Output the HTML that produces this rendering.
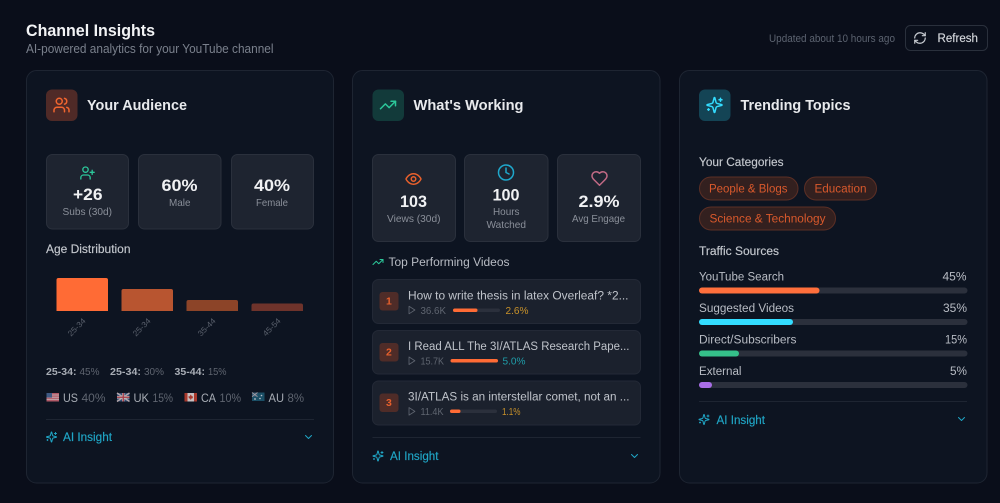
<!DOCTYPE html>
<html lang="en">
<head>
<meta charset="utf-8">
<title>Channel Insights</title>
<style>
html,body{margin:0;padding:0;background:#0a0e1a;width:1000px;height:503px;overflow:hidden}
svg{display:block;filter:blur(.3px)}
text{font-family:"Liberation Sans",sans-serif;white-space:pre}
.i{fill:none;stroke-linecap:round;stroke-linejoin:round;stroke-width:2}
.b{font-weight:700}
.card{fill:#0d1421;stroke:#1e2532}
.box{fill:#1e2430;stroke:#2a303c}
.row{fill:#1b212d;stroke:#232936}
.lab{fill:#8a8f99;font-size:10.5px}
.num{fill:#f0f1f3;font-size:16.5px;font-weight:700}
.h{fill:#e8eaed;font-size:14.5px;font-weight:700}
.sub{fill:#c4c8ce;font-size:11.5px;stroke:#c4c8ce;stroke-width:.15px}
.ai{fill:#20a6c6;font-size:11.5px;stroke:#20a6c6;stroke-width:.15px}
.tag{fill:#d9592c;font-size:11.5px}
.pill{fill:#33201f;stroke:#5c2f25}
.t{fill:#b8bcc4;font-size:11.500px}
.m{fill:#5f6570;font-size:10.5px}
.g{fill:#5f6570;font-size:11.5px}
.c{fill:#a8adb5;font-size:11.5px}
.lb{fill:#a8adb5;font-size:10.5px;font-weight:700}
.x{fill:#5a606c;font-size:8px}
.tr{fill:#2b303c}
.vt{fill:#bfc3ca;font-size:11.5px}
.n{fill:#e8602c;font-size:10.5px;font-weight:700}
</style>
</head>
<body>
<svg xmlns="http://www.w3.org/2000/svg" width="1000" height="503" viewBox="0 0 1000 503">
<defs>
<g id="users"><path d="M16 21v-2a4 4 0 0 0-4-4H6a4 4 0 0 0-4 4v2"/><circle cx="9" cy="7" r="4"/><path d="M22 21v-2a4 4 0 0 0-3-3.87"/><path d="M16 3.13a4 4 0 0 1 0 7.75"/></g>
<g id="uplus"><path d="M16 21v-2a4 4 0 0 0-4-4H6a4 4 0 0 0-4 4v2"/><circle cx="9" cy="7" r="4"/><path d="M19 8v6M22 11h-6"/></g>
<g id="trend"><path d="M22 7l-8.5 8.500-5-5L2 17"/><path d="M16 7h6v6"/></g>
<g id="spark"><path d="M9.937 15.500A2 2 0 0 0 8.500 14.063l-6.135-1.582a.5.5 0 0 1 0-.962L8.500 9.936A2 2 0 0 0 9.937 8.500l1.582-6.135a.5.5 0 0 1 .963 0L14.063 8.500A2 2 0 0 0 15.500 9.937l6.135 1.581a.5.5 0 0 1 0 .964L15.500 14.063a2 2 0 0 0-1.437 1.437l-1.582 6.135a.5.5 0 0 1-.963 0z"/><path d="M20 3v4M22 5h-4M4 17v2M5 18H3"/></g>
<g id="refresh"><path d="M3 12a9 9 0 0 1 9-9 9.750 9.750 0 0 1 6.740 2.740L21 8"/><path d="M21 3v5h-5"/><path d="M21 12a9 9 0 0 1-9 9 9.750 9.750 0 0 1-6.740-2.740L3 16"/><path d="M8 16H3v5"/></g>
<g id="eye"><path d="M2 12s3-7 10-7 10 7 10 7-3 7-10 7-10-7-10-7Z"/><circle cx="12" cy="12" r="3"/></g>
<g id="clock"><circle cx="12" cy="12" r="10"/><path d="M12 6v6l4 2"/></g>
<g id="heart"><path d="M19 14c1.490-1.460 3-3.210 3-5.500A5.500 5.500 0 0 0 16.500 3c-1.760 0-3 .5-4.500 2-1.500-1.500-2.740-2-4.500-2A5.500 5.500 0 0 0 2 8.500c0 2.300 1.500 4.050 3 5.500l7 7Z"/></g>
<g id="play"><path d="M6 3l14 9-14 9z"/></g>
<g id="chev"><path d="M6 9l6 6 6-6"/></g>
</defs>

<rect width="1000" height="503" fill="#0a0e1a"/>

<!-- Header -->
<text x="26" y="36" fill="#f2f3f5" font-size="16.5" class="b" textLength="129" lengthAdjust="spacingAndGlyphs">Channel Insights</text>
<text x="26" y="53" fill="#7a808c" font-size="12.5" textLength="247.500" lengthAdjust="spacingAndGlyphs">AI-powered analytics for your YouTube channel</text>
<text x="769" y="42" fill="#5c6370" font-size="11" textLength="126" lengthAdjust="spacingAndGlyphs">Updated about 10 hours ago</text>
<rect x="905.500" y="25.500" width="82" height="25" rx="5" fill="#0b101c" stroke="#2a303c"/>
<use href="#refresh" class="i" stroke="#c8ccd2" transform="translate(913,31) scale(.583)"/>
<text x="937.500" y="42" fill="#d5d8dd" font-size="11.5" stroke="#d5d8dd" stroke-width=".15" textLength="40.500" lengthAdjust="spacingAndGlyphs">Refresh</text>

<!-- Card 1 -->
<rect class="card" x="26.500" y="70.500" width="307" height="412.500" rx="10"/>
<rect x="46" y="89.500" width="31.500" height="31.500" rx="6" fill="#4f2a27"/>
<use href="#users" class="i" stroke="#f0652f" transform="translate(52.500,96) scale(.75)"/>
<text class="h" x="87" y="110" textLength="100" lengthAdjust="spacingAndGlyphs">Your Audience</text>

<rect class="box" x="46.500" y="154.500" width="82" height="74.500" rx="6"/>
<rect class="box" x="138.500" y="154.500" width="82.500" height="74.500" rx="6"/>
<rect class="box" x="231.500" y="154.500" width="82" height="74.500" rx="6"/>
<use href="#uplus" class="i" stroke="#2cc79a" transform="translate(79.500,165) scale(.667)"/>
<text class="num" x="73" y="200" textLength="29.500" lengthAdjust="spacingAndGlyphs">+26</text>
<text class="lab" x="62.500" y="215" textLength="49.500" lengthAdjust="spacingAndGlyphs">Subs (30d)</text>
<text class="num" x="161.500" y="191" textLength="36" lengthAdjust="spacingAndGlyphs">60%</text>
<text class="lab" x="169" y="206" textLength="21.500" lengthAdjust="spacingAndGlyphs">Male</text>
<text class="num" x="254" y="191" textLength="36" lengthAdjust="spacingAndGlyphs">40%</text>
<text class="lab" x="256" y="206" textLength="32" lengthAdjust="spacingAndGlyphs">Female</text>

<text class="sub" x="46" y="253" textLength="84.500" lengthAdjust="spacingAndGlyphs">Age Distribution</text>
<path d="M56.500 311v-31a2 2 0 0 1 2-2h47.500a2 2 0 0 1 2 2v31z" fill="#ff6b35"/>
<path d="M121.500 311v-20a2 2 0 0 1 2-2h47.500a2 2 0 0 1 2 2v20z" fill="#b85530"/>
<path d="M186.500 311v-9a2 2 0 0 1 2-2h47.500a2 2 0 0 1 2 2v9z" fill="#8c4428"/>
<path d="M251.500 311v-5.500a2 2 0 0 1 2-2h47.500a2 2 0 0 1 2 2v5.500z" fill="#6e332b"/>
<text class="x" transform="translate(71,336.700) rotate(-45)" textLength="21.500" lengthAdjust="spacingAndGlyphs">25-34</text>
<text class="x" transform="translate(136,336.700) rotate(-45)" textLength="21.500" lengthAdjust="spacingAndGlyphs">25-34</text>
<text class="x" transform="translate(201,336.700) rotate(-45)" textLength="21.500" lengthAdjust="spacingAndGlyphs">35-44</text>
<text class="x" transform="translate(266,336.700) rotate(-45)" textLength="21.500" lengthAdjust="spacingAndGlyphs">45-54</text>

<text class="lb" x="46" y="375" textLength="30.500" lengthAdjust="spacingAndGlyphs">25-34:</text>
<text class="m" x="79.500" y="375" textLength="20" lengthAdjust="spacingAndGlyphs">45%</text>
<text class="lb" x="110" y="375" textLength="31" lengthAdjust="spacingAndGlyphs">25-34:</text>
<text class="m" x="144" y="375" textLength="20" lengthAdjust="spacingAndGlyphs">30%</text>
<text class="lb" x="174.500" y="375" textLength="30.500" lengthAdjust="spacingAndGlyphs">35-44:</text>
<text class="m" x="208" y="375" textLength="18.500" lengthAdjust="spacingAndGlyphs">15%</text>

<!-- Flags -->
<g opacity=".82">
<g transform="translate(46.500,393)"><rect width="12.500" height="8.500" fill="#d66a78"/><path d="M0 2h12.500M0 4.200h12.500M0 6.400h12.500" stroke="#eac9cc" stroke-width="1"/><rect width="5.500" height="4.500" fill="#4a6a9a"/></g>
<g transform="translate(117,393)"><rect width="12.500" height="8.500" fill="#3c5a85"/><path d="M0 0l12.500 8.500M12.500 0L0 8.500" stroke="#d9c6c8" stroke-width="1.500"/><path d="M6.250 0v8.500M0 4.250h12.500" stroke="#e8e0e0" stroke-width="2.400"/><path d="M6.250 0v8.500M0 4.250h12.500" stroke="#c9434e" stroke-width="1.300"/></g>
<g transform="translate(184.500,393)"><rect width="12.500" height="8.500" fill="#f0e4e2"/><rect width="3" height="8.500" fill="#c9402f"/><rect x="9.500" width="3" height="8.500" fill="#c9402f"/><path d="M6.250 1.500l1.300 2 1-.3-.4 2-1.500.6v1h-.8v-1l-1.500-.6-.4-2 1 .3z" fill="#c9402f"/></g>
<g transform="translate(252,392.500)"><rect width="12.500" height="8.500" fill="#1f5c76"/><rect width="5.500" height="4.200" fill="#3a6a88"/><path d="M0 0l5.500 4.200M5.500 0L0 4.200" stroke="#c8b8bc" stroke-width=".8"/><circle cx="9.500" cy="3" r=".8" fill="#dfe8ee"/><circle cx="8" cy="6" r=".8" fill="#dfe8ee"/><circle cx="3" cy="6.500" r=".9" fill="#dfe8ee"/></g>
</g>
<text class="c" x="63" y="402" textLength="15" lengthAdjust="spacingAndGlyphs">US</text>
<text class="g" x="81.500" y="402" textLength="24" lengthAdjust="spacingAndGlyphs">40%</text>
<text class="c" x="133.500" y="402" textLength="15.500" lengthAdjust="spacingAndGlyphs">UK</text>
<text class="g" x="152.500" y="402" textLength="20.500" lengthAdjust="spacingAndGlyphs">15%</text>
<text class="c" x="201" y="402" textLength="15" lengthAdjust="spacingAndGlyphs">CA</text>
<text class="g" x="219.500" y="402" textLength="21.500" lengthAdjust="spacingAndGlyphs">10%</text>
<text class="c" x="268.500" y="402" textLength="15.500" lengthAdjust="spacingAndGlyphs">AU</text>
<text class="g" x="287.500" y="402" textLength="16.500" lengthAdjust="spacingAndGlyphs">8%</text>

<path d="M46 419.500h268" stroke="#1e2532"/>
<use href="#spark" class="i" stroke="#20a6c6" transform="translate(45.500,431) scale(.5)"/>
<text class="ai" x="63" y="441" textLength="49" lengthAdjust="spacingAndGlyphs">AI Insight</text>
<use href="#chev" class="i" stroke="#20a6c6" transform="translate(302.500,431) scale(.5)"/>

<!-- Card 2 -->
<rect class="card" x="352.500" y="70.500" width="307.500" height="412.500" rx="10"/>
<rect x="372.500" y="89.500" width="31.500" height="31.500" rx="6" fill="#123a3a"/>
<use href="#trend" class="i" stroke="#2cc79a" transform="translate(379,96) scale(.75)"/>
<text class="h" x="413.500" y="110" textLength="110" lengthAdjust="spacingAndGlyphs">What's Working</text>

<rect class="box" x="372.500" y="154.500" width="83" height="87" rx="6"/>
<rect class="box" x="464.500" y="154.500" width="83.500" height="87" rx="6"/>
<rect class="box" x="557.500" y="154.500" width="83" height="87" rx="6"/>
<use href="#eye" class="i" stroke="#e8602c" transform="translate(404.500,170) scale(.75)"/>
<text class="num" x="400" y="207" textLength="27" lengthAdjust="spacingAndGlyphs">103</text>
<text class="lab" x="387" y="222" textLength="53.500" lengthAdjust="spacingAndGlyphs">Views (30d)</text>
<use href="#clock" class="i" stroke="#1fa8cc" transform="translate(497,163.500) scale(.75)"/>
<text class="num" x="492.500" y="200.500" textLength="27" lengthAdjust="spacingAndGlyphs">100</text>
<text class="lab" x="493" y="215" textLength="26.500" lengthAdjust="spacingAndGlyphs">Hours</text>
<text class="lab" x="486.500" y="228" textLength="39.500" lengthAdjust="spacingAndGlyphs">Watched</text>
<use href="#heart" class="i" stroke="#c26a85" transform="translate(590.500,169.500) scale(.75)"/>
<text class="num" x="578.500" y="207" textLength="41" lengthAdjust="spacingAndGlyphs">2.9%</text>
<text class="lab" x="572" y="222" textLength="53" lengthAdjust="spacingAndGlyphs">Avg Engage</text>

<use href="#trend" class="i" stroke="#2cc79a" transform="translate(372,256) scale(.5)"/>
<text class="t" x="388.500" y="266" textLength="121" lengthAdjust="spacingAndGlyphs">Top Performing Videos</text>

<rect class="row" x="372.500" y="279.500" width="268" height="44" rx="6"/>
<rect class="row" x="372.500" y="330.500" width="268" height="43.500" rx="6"/>
<rect class="row" x="372.500" y="381" width="268" height="44" rx="6"/>

<rect x="379.500" y="292" width="19" height="18.500" rx="3" fill="#4f2c28"/>
<text class="n" x="386" y="304.500" textLength="5.800" lengthAdjust="spacingAndGlyphs">1</text>
<text class="vt" x="408" y="299.500" textLength="220.500" lengthAdjust="spacingAndGlyphs">How to write thesis in latex Overleaf? *2...</text>
<use href="#play" class="i" stroke="#5f6570" transform="translate(406.500,305) scale(.42)"/>
<text class="m" x="420.500" y="314" textLength="25.500" lengthAdjust="spacingAndGlyphs">36.6K</text>
<rect class="tr" x="453" y="308.500" width="47" height="3.500" rx="1.750"/>
<rect x="453" y="308.500" width="24.500" height="3.500" rx="1.750" fill="#ff6b35"/>
<text x="505.500" y="314" fill="#c9922a" font-size="10.5" textLength="23" lengthAdjust="spacingAndGlyphs">2.6%</text>

<rect x="379.500" y="343" width="19" height="18.500" rx="3" fill="#4f2c28"/>
<text class="n" x="386" y="355.500" textLength="5.800" lengthAdjust="spacingAndGlyphs">2</text>
<text class="vt" x="408" y="350" textLength="221.500" lengthAdjust="spacingAndGlyphs">I Read ALL The 3I/ATLAS Research Pape...</text>
<use href="#play" class="i" stroke="#5f6570" transform="translate(406.500,355.700) scale(.42)"/>
<text class="m" x="420.500" y="364.500" textLength="23.500" lengthAdjust="spacingAndGlyphs">15.7K</text>
<rect x="450.500" y="359" width="47.500" height="3.500" rx="1.750" fill="#ff6b35"/>
<text x="502.500" y="364.500" fill="#1f9eaa" font-size="10.5" textLength="23" lengthAdjust="spacingAndGlyphs">5.0%</text>

<rect x="379.500" y="393.500" width="19" height="18.500" rx="3" fill="#4f2c28"/>
<text class="n" x="386" y="406" textLength="5.800" lengthAdjust="spacingAndGlyphs">3</text>
<text class="vt" x="408" y="400.500" textLength="221.500" lengthAdjust="spacingAndGlyphs">3I/ATLAS is an interstellar comet, not an ...</text>
<use href="#play" class="i" stroke="#5f6570" transform="translate(406.500,406.300) scale(.42)"/>
<text class="m" x="420.500" y="415" textLength="23" lengthAdjust="spacingAndGlyphs">11.4K</text>
<rect class="tr" x="450" y="409.500" width="47" height="3.500" rx="1.750"/>
<rect x="450" y="409.500" width="10.500" height="3.500" rx="1.750" fill="#ff6b35"/>
<text x="502" y="415" fill="#c9922a" font-size="10.5" textLength="18.500" lengthAdjust="spacingAndGlyphs">1.1%</text>

<path d="M372.500 437.500h268" stroke="#1e2532"/>
<use href="#spark" class="i" stroke="#20a6c6" transform="translate(372,450) scale(.5)"/>
<text class="ai" x="390" y="460" textLength="48.500" lengthAdjust="spacingAndGlyphs">AI Insight</text>
<use href="#chev" class="i" stroke="#20a6c6" transform="translate(628.500,450) scale(.5)"/>

<!-- Card 3 -->
<rect class="card" x="679.500" y="70.500" width="307.500" height="412.500" rx="10"/>
<rect x="699" y="89.500" width="31.500" height="31.500" rx="6" fill="#144455"/>
<use href="#spark" class="i" stroke="#33dcff" transform="translate(705.500,96) scale(.75)"/>
<text class="h" x="740.500" y="110" textLength="110" lengthAdjust="spacingAndGlyphs">Trending Topics</text>

<text class="sub" x="699" y="166" textLength="84.500" lengthAdjust="spacingAndGlyphs">Your Categories</text>
<rect class="pill" x="699.500" y="177" width="98.500" height="23" rx="11.500"/>
<text class="tag" x="709" y="192.500" textLength="78.500" lengthAdjust="spacingAndGlyphs">People &amp; Blogs</text>
<rect class="pill" x="804.500" y="177" width="72" height="23" rx="11.500"/>
<text class="tag" x="814.500" y="192.500" textLength="52" lengthAdjust="spacingAndGlyphs">Education</text>
<rect class="pill" x="699.500" y="207" width="136" height="23" rx="11.500"/>
<text class="tag" x="709.500" y="222.500" textLength="116" lengthAdjust="spacingAndGlyphs">Science &amp; Technology</text>

<text class="sub" x="699" y="255" textLength="80" lengthAdjust="spacingAndGlyphs">Traffic Sources</text>

<text class="t" x="699" y="280.500" textLength="85" lengthAdjust="spacingAndGlyphs">YouTube Search</text>
<text class="t" x="942.500" y="280.500" textLength="24" lengthAdjust="spacingAndGlyphs">45%</text>
<rect class="tr" x="699" y="287.500" width="268.500" height="6" rx="3"/>
<rect x="699" y="287.500" width="120.500" height="6" rx="3" fill="#ff6f3c"/>

<text class="t" x="699" y="312" textLength="95" lengthAdjust="spacingAndGlyphs">Suggested Videos</text>
<text class="t" x="943" y="312" textLength="24" lengthAdjust="spacingAndGlyphs">35%</text>
<rect class="tr" x="699" y="319" width="268.500" height="6" rx="3"/>
<rect x="699" y="319" width="94" height="6" rx="3" fill="#33dcff"/>

<text class="t" x="699" y="343.500" textLength="97.500" lengthAdjust="spacingAndGlyphs">Direct/Subscribers</text>
<text class="t" x="945" y="343.500" textLength="22" lengthAdjust="spacingAndGlyphs">15%</text>
<rect class="tr" x="699" y="350.500" width="268.500" height="6" rx="3"/>
<rect x="699" y="350.500" width="40" height="6" rx="3" fill="#35c08a"/>

<text class="t" x="699" y="375" textLength="42.500" lengthAdjust="spacingAndGlyphs">External</text>
<text class="t" x="950" y="375" textLength="17" lengthAdjust="spacingAndGlyphs">5%</text>
<rect class="tr" x="699" y="382" width="268.500" height="6" rx="3"/>
<rect x="699" y="382" width="13" height="6" rx="3" fill="#a96ee8"/>

<path d="M699 401.500h268" stroke="#1e2532"/>
<use href="#spark" class="i" stroke="#20a6c6" transform="translate(698,413.500) scale(.5)"/>
<text class="ai" x="716.500" y="424" textLength="48.500" lengthAdjust="spacingAndGlyphs">AI Insight</text>
<use href="#chev" class="i" stroke="#20a6c6" transform="translate(955.500,413) scale(.5)"/>
</svg>
</body>
</html>
